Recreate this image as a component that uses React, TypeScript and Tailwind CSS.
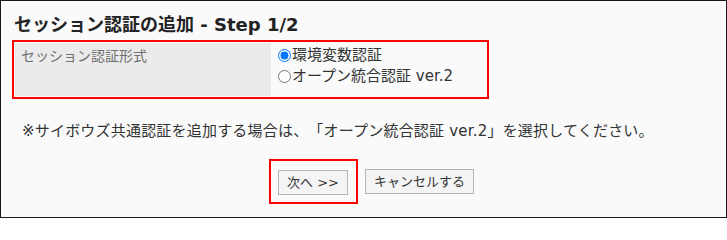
import React from 'react';

const jp = '[font-family:"DejaVu_Sans","Noto_Sans_CJK_JP",sans-serif]';

const App = () => {
  return (
    <div className={`w-[727px] h-[218px] border border-[#1a1a1a] bg-[#fafafa] text-[#333] [text-spacing-trim:space-all] ${jp}`}>
      <h1 className="ml-[13px] mt-[14px] h-[20px] text-[18px] leading-[20px] font-bold text-[#222]">
        セッション認証の追加 - Step 1/2
      </h1>

      <div className="ml-[11px] mt-[5px] w-[477px] h-[59px] border-2 border-[#ff0000] p-[1px] flex">
        <div className="w-[256px] h-[53px] bg-[#ebebeb] pl-[6px] pt-[3px] text-[14px] leading-[20px] text-[#707070]">
          セッション認証形式
        </div>
        <div className="flex-1 pl-[7px] pt-[2px] text-[15px] leading-[21px]">
          <label className="flex items-center">
            <input type="radio" name="auth" defaultChecked className="m-0 w-[13px] h-[13px]" />
            <span className="ml-[1px]">環境変数認証</span>
          </label>
          <label className="flex items-center">
            <input type="radio" name="auth" className="m-0 w-[13px] h-[13px]" />
            <span className="ml-[1px]">オープン統合認証 ver.2</span>
          </label>
        </div>
      </div>

      <p className="ml-[21px] mt-[22px] text-[15px] leading-[21px] tracking-[0.2px]">
        ※サイボウズ共通認証を追加する場合は、「オープン統合認証 ver.2」を選択してください。
      </p>

      <div className="ml-[268px] mt-[17px] flex items-center gap-[7px]">
        <div className="border-2 border-[#ff0000] px-[7px] pt-[9px] pb-[7px] pr-[8px]">
          <button className="w-[70px] h-[25px] border border-[#b5b5b5] bg-[#f4f4f4] text-[13px] leading-[23px] text-[#333]">
            次へ &gt;&gt;
          </button>
        </div>
        <button className="w-[109px] h-[25px] border border-[#b5b5b5] bg-[#f4f4f4] text-[13px] leading-[23px] text-[#333]">
          キャンセルする
        </button>
      </div>
    </div>
  );
};

export default App;
